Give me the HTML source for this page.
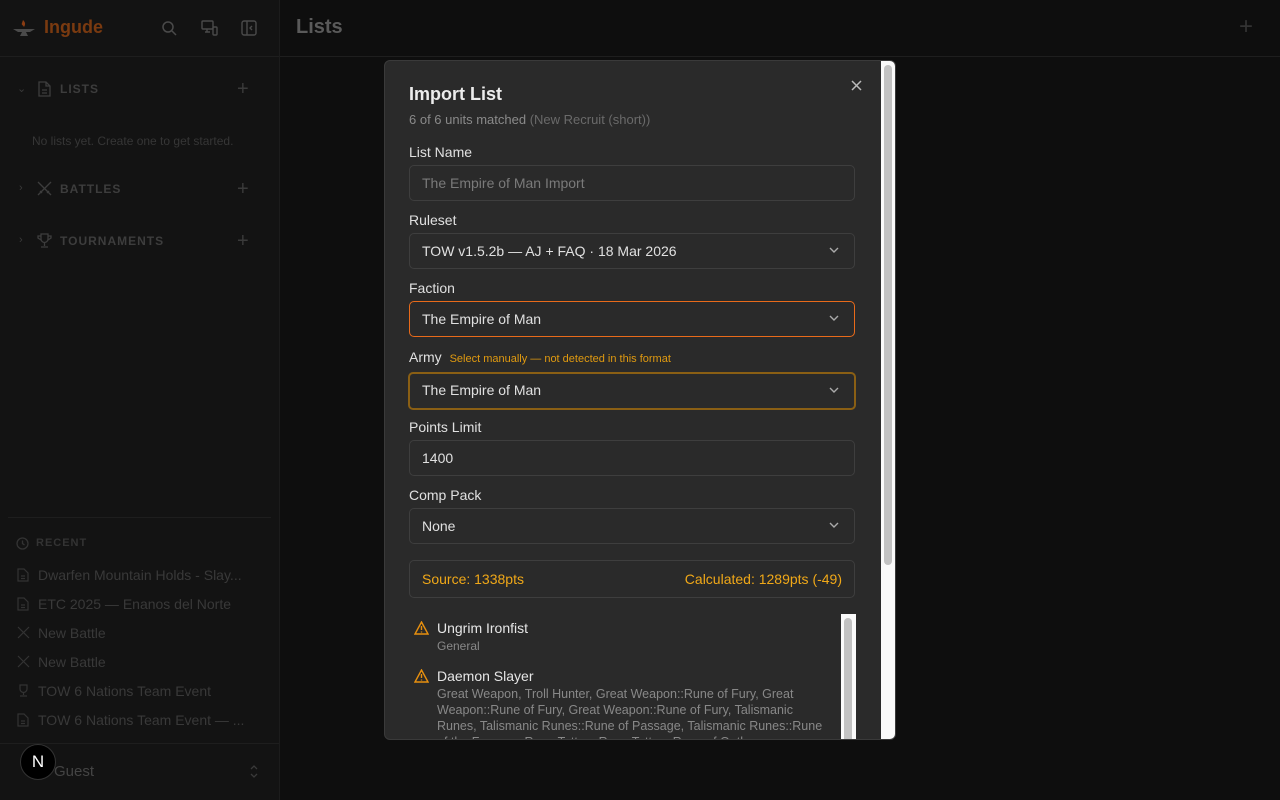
<!DOCTYPE html>
<html><head><meta charset="utf-8"><style>
*{box-sizing:border-box;margin:0;padding:0}
body{width:1280px;height:800px;overflow:hidden;background:#0e0e0e;font-family:"Liberation Sans",sans-serif;position:relative}
.side{position:absolute;left:0;top:0;width:280px;height:800px;background:#131313;border-right:1px solid #1c1c1c}
.hdr{height:57px;border-bottom:1px solid #1e1e1e;position:relative}
.abs{position:absolute}
.sec{position:absolute;left:60px;font-size:12px;font-weight:bold;letter-spacing:1px;color:#3d3d3d}
.plus{position:absolute;color:#3a3a3a;font-size:20px;line-height:20px}
.rec{position:absolute;left:38px;font-size:14px;color:#393939}
.main-t{position:absolute;left:296px;top:16px;font-size:20px;font-weight:bold;color:#5a5a5a}
.modal{position:absolute;left:384px;top:60px;width:512px;height:680px;background:#2a2a2a;border:1px solid #3a3a3a;border-radius:6px;overflow:hidden}
.lab{position:absolute;left:25px;font-size:14px;color:#e0e0e0}
.inp{position:absolute;left:25px;width:446px;height:36px;border:1px solid #3e3e3e;border-radius:5px;font-size:14px;color:#e0e0e0;padding:9px 12px;line-height:16px}
.chev{position:absolute;right:14px;top:10px}
.sb{position:absolute;left:496px;top:0;width:15px;height:680px;background:#fafafa}
.sbt{position:absolute;left:3px;top:4px;width:8px;height:500px;background:#c2c2c2;border-radius:4px}
</style></head><body>
<div class="side">
 <div class="hdr">
  <svg class="abs" style="left:12px;top:18px" width="24" height="20" viewBox="0 0 24 20"><path d="M11 2c2 2 3 4 1 7-1-2-3-2-2-4z" fill="#8a3c12"/><path d="M1 11h22l-5 3h-4l2 4H8l2-4H6z" fill="#4a4a4a"/></svg>
  <div class="abs" style="left:44px;top:17px;font-size:18px;font-weight:bold;color:#7a3a10">Ingude</div>
  <svg class="abs" style="left:161px;top:20px" width="16" height="16" fill="none" stroke="#4a4a4a" stroke-width="1.5"><circle cx="7" cy="7" r="5"/><path d="M11 11l4 4"/></svg>
  <svg class="abs" style="left:201px;top:20px" width="17" height="16" fill="none" stroke="#4a4a4a" stroke-width="1.4"><rect x="1" y="1" width="11" height="8" rx="1"/><path d="M4 12h5M6 9v3"/><rect x="12" y="7" width="4" height="8" rx="1"/></svg>
  <svg class="abs" style="left:241px;top:20px" width="16" height="16" fill="none" stroke="#4a4a4a" stroke-width="1.4"><rect x="1" y="1" width="14" height="14" rx="2"/><path d="M6 1v14M11 6l-2 2 2 2"/></svg>
 </div>
 <div class="abs" style="left:17px;top:82px;color:#3a3a3a;font-size:11px">⌄</div>
 <svg class="abs" style="left:37px;top:81px" width="14" height="16" fill="none" stroke="#3d3d3d" stroke-width="1.3"><path d="M2 1h7l4 4v10H2zM9 1v4h4M5 9h5M5 12h5"/></svg>
 <div class="sec" style="top:82px">LISTS</div><div class="plus" style="left:237px;top:79px">+</div>
 <div class="abs" style="left:32px;top:134px;font-size:12px;color:#363636">No lists yet. Create one to get started.</div>
 <div class="abs" style="left:19px;top:182px;color:#3a3a3a;font-size:11px">›</div>
 <svg class="abs" style="left:37px;top:181px" width="15" height="15" fill="none" stroke="#3d3d3d" stroke-width="1.3"><path d="M1 1l13 13M14 1L1 14M3 10l2 2M12 10l-2 2"/></svg>
 <div class="sec" style="top:182px">BATTLES</div><div class="plus" style="left:237px;top:179px">+</div>
 <div class="abs" style="left:19px;top:234px;color:#3a3a3a;font-size:11px">›</div>
 <svg class="abs" style="left:37px;top:233px" width="15" height="15" fill="none" stroke="#3d3d3d" stroke-width="1.3"><path d="M4 1h7v5a3.5 3.5 0 01-7 0zM4 3H1v2l3 2M11 3h3v2l-3 2M7.5 10v3M4 14h7"/></svg>
 <div class="sec" style="top:234px">TOURNAMENTS</div><div class="plus" style="left:237px;top:231px">+</div>
 <div class="abs" style="left:8px;top:517px;width:263px;height:1px;background:#1e1e1e"></div>
 <svg class="abs" style="left:16px;top:537px" width="13" height="13" fill="none" stroke="#333" stroke-width="1.3"><circle cx="6.5" cy="6.5" r="5.5"/><path d="M6.5 3.5v3l2 1.5"/></svg>
 <div class="abs" style="left:36px;top:537px;font-size:11px;font-weight:bold;letter-spacing:1px;color:#333">RECENT</div>
 <div class="rec" style="top:567px">Dwarfen Mountain Holds - Slay...</div>
 <div class="rec" style="top:596px">ETC 2025 — Enanos del Norte</div>
 <div class="rec" style="top:625px">New Battle</div>
 <div class="rec" style="top:654px">New Battle</div>
 <div class="rec" style="top:683px">TOW 6 Nations Team Event</div>
 <div class="rec" style="top:712px">TOW 6 Nations Team Event — ...</div>
 <svg class="abs" style="left:17px;top:568px" width="12" height="14" fill="none" stroke="#333" stroke-width="1.2"><path d="M1 1h6l4 4v8H1zM4 8h4M4 10.5h4"/></svg>
 <svg class="abs" style="left:17px;top:597px" width="12" height="14" fill="none" stroke="#333" stroke-width="1.2"><path d="M1 1h6l4 4v8H1zM4 8h4M4 10.5h4"/></svg>
 <svg class="abs" style="left:17px;top:626px" width="13" height="13" fill="none" stroke="#333" stroke-width="1.2"><path d="M1 1l11 11M12 1L1 12"/></svg>
 <svg class="abs" style="left:17px;top:655px" width="13" height="13" fill="none" stroke="#333" stroke-width="1.2"><path d="M1 1l11 11M12 1L1 12"/></svg>
 <svg class="abs" style="left:17px;top:684px" width="13" height="13" fill="none" stroke="#333" stroke-width="1.2"><path d="M3 1h7v4a3.5 3.5 0 01-7 0zM6.5 8.5v2.5M3 12h7"/></svg>
 <svg class="abs" style="left:17px;top:713px" width="12" height="14" fill="none" stroke="#333" stroke-width="1.2"><path d="M1 1h6l4 4v8H1zM4 8h4M4 10.5h4"/></svg>
 <div class="abs" style="left:0;top:743px;width:279px;height:1px;background:#1e1e1e"></div>
 <div class="abs" style="left:54px;top:763px;font-size:15px;color:#444">Guest</div>
 <svg class="abs" style="left:249px;top:764px" width="10" height="15" fill="none" stroke="#3a3a3a" stroke-width="1.3"><path d="M2 5l3-3 3 3M2 10l3 3 3-3"/></svg>
 <div class="abs" style="left:20px;top:744px;width:36px;height:36px;border-radius:50%;background:#000;border:1px solid #333;color:#fff;font-size:17px;text-align:center;line-height:34px">N</div>
</div>
<div class="abs" style="left:280px;top:56px;width:1000px;height:1px;background:#1e1e1e"></div>
<div class="main-t">Lists</div>
<div class="plus" style="left:1239px;top:17px;font-size:24px;color:#333">+</div>

<div class="modal">
 <div class="abs" style="left:24px;top:23px;font-size:18px;font-weight:bold;color:#ececec">Import List</div>
 <div class="abs" style="left:24px;top:51px;font-size:13px;color:#8a8a8a">6 of 6 units matched <span style="color:#6a6a6a">(New Recruit (short))</span></div>
 <svg class="abs" style="left:466px;top:19px" width="11" height="11" stroke="#bbb" stroke-width="1.5"><path d="M1 1l9 9M10 1l-9 9"/></svg>
 <div class="lab" style="top:83px;left:24px">List Name</div>
 <div class="inp" style="top:104px;left:24px;color:#7a7a7a">The Empire of Man Import</div>
 <div class="lab" style="top:151px;left:24px">Ruleset</div>
 <div class="inp" style="top:172px;left:24px">TOW v1.5.2b — AJ + FAQ · 18 Mar 2026<svg class="chev" width="12" height="12" fill="none" stroke="#aaa" stroke-width="1.4"><path d="M2 4l4 4 4-4"/></svg></div>
 <div class="lab" style="top:219px;left:24px">Faction</div>
 <div class="inp" style="top:240px;left:24px;border-color:#e86a1a">The Empire of Man<svg class="chev" width="12" height="12" fill="none" stroke="#aaa" stroke-width="1.4"><path d="M2 4l4 4 4-4"/></svg></div>
 <div class="lab" style="top:288px;left:24px">Army <span style="font-size:11px;color:#e09a10;margin-left:4px">Select manually — not detected in this format</span></div>
 <div class="inp" style="top:311px;left:23px;width:448px;height:38px;border:2px solid #8a5f14;padding:8px 12px">The Empire of Man<svg class="chev" width="12" height="12" fill="none" stroke="#aaa" stroke-width="1.4"><path d="M2 4l4 4 4-4"/></svg></div>
 <div class="lab" style="top:358px;left:24px">Points Limit</div>
 <div class="inp" style="top:379px;left:24px">1400</div>
 <div class="lab" style="top:426px;left:24px">Comp Pack</div>
 <div class="inp" style="top:447px;left:24px">None<svg class="chev" width="12" height="12" fill="none" stroke="#aaa" stroke-width="1.4"><path d="M2 4l4 4 4-4"/></svg></div>
 <div class="inp" style="top:499px;left:24px;height:38px;color:#f0a818;padding:10px 12px">Source: 1338pts<span style="float:right">Calculated: 1289pts (-49)</span></div>
 <div class="abs" style="left:456px;top:553px;width:15px;height:130px;background:#fafafa"><div style="margin:4px 3px;width:8px;height:130px;background:#c2c2c2;border-radius:4px"></div></div>
 <svg class="abs" style="left:29px;top:560px" width="15" height="14" fill="none" stroke="#e8900e" stroke-width="1.4"><path d="M7.5 1L14 13H1zM7.5 5v4M7.5 10.5v1"/></svg>
 <div class="abs" style="left:52px;top:559px;font-size:14px;color:#e6e6e6">Ungrim Ironfist</div>
 <div class="abs" style="left:52px;top:578px;font-size:12px;color:#888">General</div>
 <svg class="abs" style="left:29px;top:608px" width="15" height="14" fill="none" stroke="#e8900e" stroke-width="1.4"><path d="M7.5 1L14 13H1zM7.5 5v4M7.5 10.5v1"/></svg>
 <div class="abs" style="left:52px;top:607px;font-size:14px;color:#e6e6e6">Daemon Slayer</div>
 <div class="abs" style="left:52px;top:625px;width:388px;font-size:12.5px;line-height:16px;color:#888">Great Weapon, Troll Hunter, Great Weapon::Rune of Fury, Great Weapon::Rune of Fury, Great Weapon::Rune of Fury, Talismanic Runes, Talismanic Runes::Rune of Passage, Talismanic Runes::Rune of the Furnace, Rune Tattoo, Rune Tattoo, Rune of Oath</div>
 <div class="sb"><div class="sbt"></div></div>
</div>
</body></html>
